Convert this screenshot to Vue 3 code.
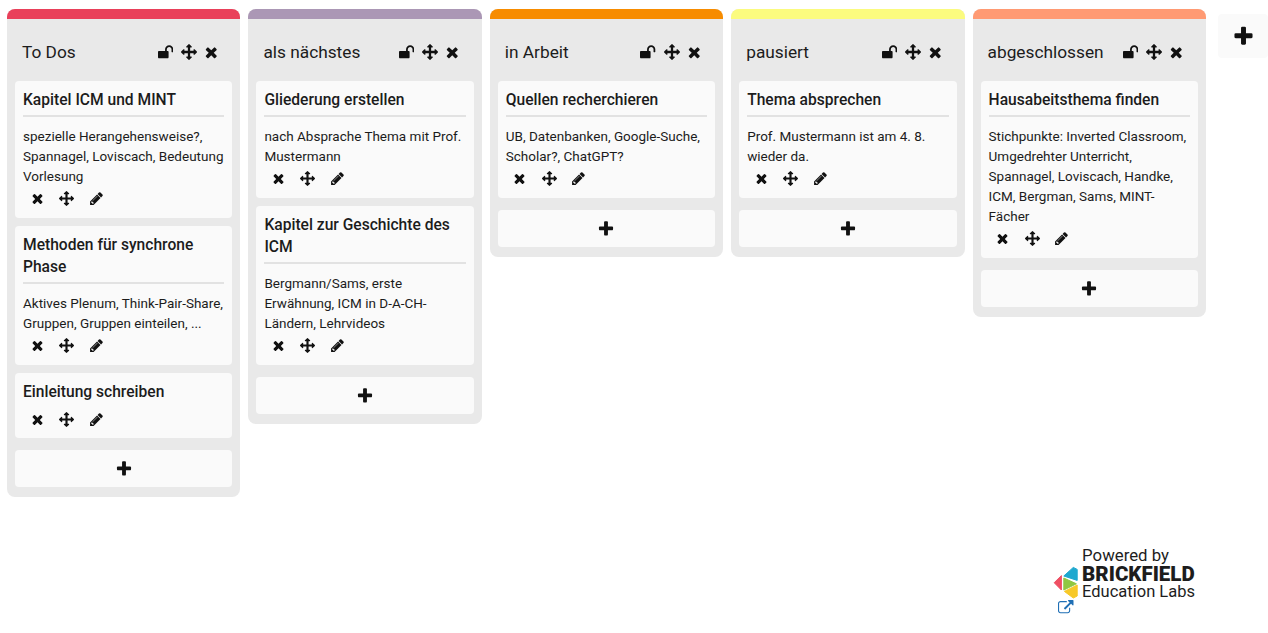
<script setup>
const P = {
  plus: ['0 0 1792 1792', 'M1600 736v192q0 40-28 68t-68 28h-416v416q0 40-28 68t-68 28h-192q-40 0-68-28t-28-68v-416h-416q-40 0-68-28t-28-68v-192q0-40 28-68t68-28h416v-416q0-40 28-68t68-28h192q40 0 68 28t28 68v416h416q40 0 68 28t28 68z'],
  times: ['0 0 1792 1792', 'M1490 1322q0 40-28 68l-136 136q-28 28-68 28t-68-28l-294-294-294 294q-28 28-68 28t-68-28l-136-136q-28-28-28-68t28-68l294-294-294-294q-28-28-28-68t28-68l136-136q28-28 68-28t68 28l294 294 294-294q28-28 68-28t68 28l136 136q28 28 28 68t-28 68l-294 294 294 294q28 28 28 68z'],
  arrows: ['0 0 1792 1792', 'M1792 896q0 26-19 45l-256 256q-19 19-45 19t-45-19-19-45v-128h-384v384h128q26 0 45 19t19 45-19 45l-256 256q-19 19-45 19t-45-19l-256-256q-19-19-19-45t19-45 45-19h128v-384h-384v128q0 26-19 45t-45 19-45-19l-256-256q-19-19-19-45t19-45l256-256q19-19 45-19t45 19 19 45v128h384v-384h-128q-26 0-45-19t-19-45 19-45l256-256q19-19 45-19t45 19l256 256q19 19 19 45t-19 45-45 19h-128v384h384v-128q0-26 19-45t45-19 45 19l256 256q19 19 19 45z'],
  pencil: ['0 0 1792 1792', 'M491 1536l91-91-235-235-91 91v107h128v128h107zm523-928q0-22-22-22-10 0-17 7l-542 542q-7 7-7 17 0 22 22 22 10 0 17-7l542-542q7-7 7-17zm-54-192l416 416-832 832h-416v-416zm683 96q0 53-37 90l-166 166-416-416 166-165q36-38 90-38 53 0 91 38l235 234q37 39 37 91z'],
  unlock: ['0 0 1664 1792', 'M1664 576v256q0 26-19 45t-45 19h-64q-26 0-45-19t-19-45v-256q0-106-75-181t-181-75-181 75-75 181v192h96q40 0 68 28t28 68v576q0 40-28 68t-68 28h-960q-40 0-68-28t-28-68v-576q0-40 28-68t68-28h672v-192q0-185 131.5-316.5t316.5-131.5 316.5 131.5 131.5 316.5z'],
  ext: ['0 0 1792 1792', 'M1408 928v320q0 119-84.500 203.500t-203.500 84.500h-832q-119 0-203.500-84.500t-84.500-203.500v-832q0-119 84.500-203.500t203.500-84.500h704q14 0 23 9t9 23v64q0 14-9 23t-23 9h-704q-66 0-113 47t-47 113v832q0 66 47 113t113 47h832q66 0 113-47t47-113v-320q0-14 9-23t23-9h64q14 0 23 9t9 23zm384-864v512q0 26-19 45t-45 19-45-19l-176-176-652 652q-10 10-23 10t-23-10l-114-114q-10-10-10-23t10-23l652-652-176-176q-19-19-19-45t19-45 45-19h512q26 0 45 19t19 45z']
}
const columns = [
  { title: 'To Dos', color: '#e9405a', cards: [
    { title: 'Kapitel ICM und MINT', body: 'spezielle Herangehensweise?, Spannagel, Loviscach, Bedeutung Vorlesung' },
    { title: 'Methoden für synchrone Phase', body: 'Aktives Plenum, Think-Pair-Share, Gruppen, Gruppen einteilen, ...' },
    { title: 'Einleitung schreiben' }
  ] },
  { title: 'als nächstes', color: '#ab97b5', cards: [
    { title: 'Gliederung erstellen', body: 'nach Absprache Thema mit Prof. Mustermann' },
    { title: 'Kapitel zur Geschichte des ICM', body: 'Bergmann/Sams, erste Erwähnung, ICM in D-A-CH-Ländern, Lehrvideos' }
  ] },
  { title: 'in Arbeit', color: '#f78c00', cards: [
    { title: 'Quellen recherchieren', body: 'UB, Datenbanken, Google-Suche, Scholar?, ChatGPT?' }
  ] },
  { title: 'pausiert', color: '#fbfb7f', cards: [
    { title: 'Thema absprechen', body: 'Prof. Mustermann ist am 4. 8. wieder da.' }
  ] },
  { title: 'abgeschlossen', color: '#ff9a73', cards: [
    { title: 'Hausabeitsthema finden', body: 'Stichpunkte: Inverted Classroom, Umgedrehter Unterricht, Spannagel, Loviscach, Handke, ICM, Bergman, Sams, MINT-Fächer' }
  ] }
]
</script>

<template>
  <div class="page">
    <div class="board">
      <section v-for="col in columns" :key="col.title" class="column">
        <div class="bar" :style="{ background: col.color }"></div>
        <div class="inner">
          <header class="col-head">
            <h2>{{ col.title }}</h2>
            <div class="col-icons">
              <svg class="i-unlock" :viewBox="P.unlock[0]"><path :d="P.unlock[1]" /></svg>
              <svg class="i-move" :viewBox="P.arrows[0]"><path :d="P.arrows[1]" /></svg>
              <svg class="i-x" :viewBox="P.times[0]"><path :d="P.times[1]" /></svg>
            </div>
          </header>
          <article v-for="card in col.cards" :key="card.title" class="card">
            <h3>{{ card.title }}</h3>
            <p v-if="card.body">{{ card.body }}</p>
            <div class="actions">
              <svg :viewBox="P.times[0]"><path :d="P.times[1]" /></svg>
              <svg :viewBox="P.arrows[0]"><path :d="P.arrows[1]" /></svg>
              <svg :viewBox="P.pencil[0]"><path :d="P.pencil[1]" /></svg>
            </div>
          </article>
          <button class="add" type="button">
            <svg :viewBox="P.plus[0]"><path :d="P.plus[1]" /></svg>
          </button>
        </div>
      </section>
      <button class="add-col" type="button">
        <svg :viewBox="P.plus[0]"><path :d="P.plus[1]" /></svg>
      </button>
    </div>
    <footer class="footer">
      <div class="brand">
        <div class="logo-col">
          <svg class="logo" viewBox="0 0 26 34">
            <path class="shape" d="M1.2 17.7 L8.4 10.6 V25 Z" fill="#ef4f63" stroke="#ef4f63" />
            <path class="shape" d="M10.8 11 L20.3 2.4 L24.2 4.4 V15.4 Z" fill="#1fa8cf" stroke="#1fa8cf" />
            <path class="shape" d="M10.8 13 V25 L23.4 18.8 Z" fill="#8fc742" stroke="#8fc742" />
            <path class="shape" d="M11.4 26.4 L24.2 20 V31 L20.3 33 Z" fill="#f7c928" stroke="#f7c928" />
          </svg>
          <svg class="ext" :viewBox="P.ext[0]"><path :d="P.ext[1]" /></svg>
        </div>
        <div class="brand-text">
          <span class="powered">Powered by</span>
          <strong>BRICKFIELD</strong>
          <span class="edu">Education Labs</span>
        </div>
      </div>
    </footer>
  </div>
</template>

<style scoped>
.page {
  width: 1268px;
  height: 633px;
  overflow: hidden;
  font-family: Roboto, "Liberation Sans", sans-serif;
  color: #1c1c1c;
}
.board {
  display: flex;
  align-items: flex-start;
  gap: 8px;
  padding: 9px 0 0 7px;
  height: 488px;
}
.column {
  width: 233.4px;
  flex: none;
  border-radius: 8px;
  overflow: hidden;
  background: #e9e9e9;
}
.bar {
  height: 10px;
}
.inner {
  padding: 0 8px 10px;
}
.col-head {
  height: 62px;
  display: flex;
  align-items: center;
  justify-content: space-between;
  padding: 4px 0 0 7px;
  box-sizing: border-box;
}
.col-head h2 {
  margin: 0;
  font-size: 17.3px;
  font-weight: 400;
  line-height: 24px;
}
.col-icons {
  display: flex;
  align-items: center;
  padding-right: 13px;
}
.col-icons svg {
  fill: #111;
  display: block;
}
.i-unlock { width: 15.3px; height: 16.5px; }
.i-move { width: 16px; height: 16px; margin-left: 8px; }
.i-x { width: 16.5px; height: 16.5px; margin-left: 6px; }
.card {
  background: #fafafa;
  border-radius: 4px;
  padding: 8px 8px 10px;
  margin-bottom: 8px;
}
.card h3 {
  margin: 0;
  font-size: 15.6px;
  font-weight: 500;
  line-height: 22px;
}
.card p {
  margin: 4px 0 0;
  border-top: 2px solid #e2e2e2;
  padding-top: 9px;
  font-size: 13.5px;
  line-height: 20px;
}
.actions {
  display: flex;
  align-items: center;
  gap: 14.5px;
  height: 20px;
  margin: 6px 0 -1px;
  padding-left: 6.5px;
}
.card p + .actions {
  margin: 2px 0 0;
}
.actions svg {
  width: 15px;
  height: 15px;
  fill: #111;
}
.add {
  display: flex;
  align-items: center;
  justify-content: center;
  width: 100%;
  height: 37px;
  margin-top: 12px;
  border: 0;
  border-radius: 4px;
  background: #fafafa;
  padding: 0;
}
.add svg {
  width: 18px;
  height: 18px;
  fill: #111;
}
.add-col {
  display: flex;
  align-items: center;
  justify-content: center;
  flex: none;
  width: 49.5px;
  height: 44px;
  margin: 5px 0 0 4.5px;
  border: 0;
  border-radius: 4px;
  background: #fafafa;
  padding: 0;
}
.add-col svg {
  width: 23px;
  height: 23px;
  fill: #111;
}
.footer {
  display: flex;
  justify-content: flex-end;
  padding: 50px 73px 0 0;
}
.brand {
  display: flex;
  gap: 3px;
  color: #1d1d1d;
}
.logo-col {
  display: flex;
  flex-direction: column;
  align-items: flex-start;
  padding-top: 18px;
}
.logo {
  width: 26px;
  height: 34px;
  display: block;
}
.shape {
  stroke-width: 1;
  stroke-linejoin: round;
}
.ext {
  width: 15.5px;
  height: 15.5px;
  fill: #1f6fb5;
  margin: 1px 0 0 5px;
}
.brand-text {
  display: flex;
  flex-direction: column;
}
.powered {
  font-size: 16.8px;
  line-height: 16px;
  margin-bottom: 2px;
}
.brand-text strong {
  font-size: 20.5px;
  font-weight: 900;
  line-height: 18px;
}
.edu {
  font-size: 16.5px;
  line-height: 18px;
}
</style>
